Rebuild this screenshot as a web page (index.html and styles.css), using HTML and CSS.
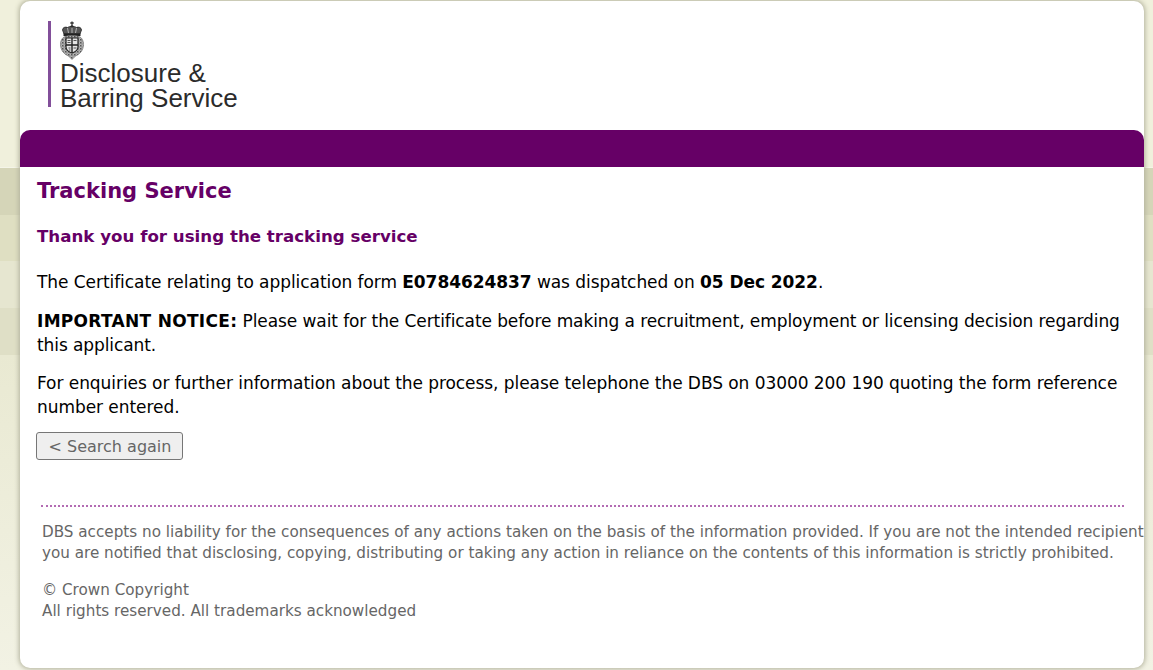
FILE: index.html
```html
<!DOCTYPE html>
<html lang="en">
  <head>
    <meta charset="UTF-8" />
    <title>Tracking Service</title>
    <link rel="stylesheet" href="styles.css">
  </head>
  <body>
    <div id="page">
      <div id="header">
        <div id="logo">
          <svg class="crest" width="26" height="40" viewBox="0 0 26 40">
            <defs>
              <pattern id="speckle" width="3" height="3" patternUnits="userSpaceOnUse">
                <rect width="3" height="3" fill="#b5b5b5" />
                <rect width="1.500" height="1.500" fill="#555" />
                <rect x="1.500" y="1.500" width="1" height="1" fill="#666" />
              </pattern>
            </defs>
            <path d="M13 0.500v4M11.300 2h3.400" stroke="#333" stroke-width="1.300" fill="none" />
            <circle cx="13" cy="5.500" r="1.500" fill="#333" />
            <path d="M5 13L3.500 9c0-2.500 3-3.500 5-2.500 1.500-1.500 7.500-1.500 9 0 2-1 5 0 5 2.500L21 13z" fill="#555" stroke="#222" stroke-width="0.800" />
            <path d="M8.500 7l1 5M13 7v5M17.500 7l-1 5" stroke="#ccc" stroke-width="0.800" />
            <rect x="4.500" y="12.500" width="17" height="2.500" fill="#222" />
            <path d="M13 14.500c6 0 11.500 1 11.500 9 0 6-4 10-8 11.500l-3.500 3.500-3.500-3.500c-4-1.500-8-5.500-8-11.500 0-8 5.500-9 11.500-9z" fill="url(#speckle)" stroke="#666" stroke-width="0.600" />
            <path d="M7 17h12v9c0 3.500-3 5-6 6-3-1-6-2.500-6-6z" fill="#e4e4e4" stroke="#222" stroke-width="1.200" />
            <path d="M13 17v15M7 24h12" stroke="#222" stroke-width="1.400" />
            <path d="M8.500 19.500h3M14.500 19.500h3M8.500 21.500h3M14.500 27h3M9.500 27h2M10 29h1.500" stroke="#555" />
          </svg>
          <div class="logo-name">Disclosure &amp;<br />Barring Service</div>
        </div>
      </div>
      <div id="bar"></div>
      <div id="content">
        <h1>Tracking Service</h1>
        <h2>Thank you for using the tracking service</h2>
        <p>The Certificate relating to application form <b>E0784624837</b> was dispatched on <b>05 Dec 2022</b>.</p>
        <p class="notice"><b>IMPORTANT NOTICE:</b> Please wait for the Certificate before making a recruitment, employment or licensing decision regarding this applicant.</p>
        <p>For enquiries or further information about the process, please telephone the DBS on 03000 200 190 quoting the form reference number entered.</p>
        <button id="btn">&lt; Search again</button>
      </div>
      <div id="footer">
        <p>DBS accepts no liability for the consequences of any actions taken on the basis of the information provided. If you are not the intended recipient you are notified that disclosing, copying, distributing or taking any action in reliance on the contents of this information is strictly prohibited.</p>
        <p>&copy; Crown Copyright<br />All rights reserved. All trademarks acknowledged</p>
      </div>
    </div>
  </body>
</html>
```

FILE: styles.css
```css
html,
body {
  margin: 0;
  height: 670px;
  overflow: hidden;
}
body {
  font-family: "DejaVu Sans", Verdana, sans-serif;
  background: linear-gradient(
    #f0f0dc 0,
    #f0f0dc 167px,
    #f5f5e8 167px,
    #f5f5e8 168px,
    #d5d5b8 168px,
    #d5d5b8 215px,
    #dfdfc2 215px,
    #dfdfc2 261px,
    #e6e6d0 261px,
    #e6e6d0 308px,
    #dfdfc6 308px,
    #dfdfc6 355px,
    #e9e9d2 355px,
    #f2f2e4 670px
  );
}
#page {
  box-sizing: border-box;
  width: 1124px;
  height: 667px;
  margin-left: 20px;
  position: relative;
  top: 1px;
  background-color: white;
  border-radius: 10px;
  box-shadow: 0 0 5px 1px #b0b09a;
}
#header {
  height: 129px;
}
#logo {
  margin-left: 28px;
  padding-top: 20px;
  display: flex;
  flex-direction: column;
  position: relative;
}
#logo::before {
  content: "";
  position: absolute;
  left: 0;
  top: 20px;
  width: 3px;
  height: 86px;
  background-color: #824f9a;
}
.crest {
  margin-left: 11px;
  display: block;
}
.logo-name {
  margin-left: 12px;
  margin-top: 0;
  font-family: "Liberation Sans", Arial, sans-serif;
  font-size: 26px;
  line-height: 25px;
  color: #2b2b2b;
}
#bar {
  height: 37px;
  background-color: #660066;
  border-radius: 10px 10px 0 0;
}
#content {
  padding: 0 16px 0 17px;
  height: 338px;
  box-sizing: border-box;
}
h1 {
  margin: 0;
  padding-top: 11px;
  font-size: 21px;
  line-height: 27px;
  color: #660066;
}
h2 {
  margin: 22px 0 0;
  font-size: 16.66px;
  line-height: 20px;
  color: #660066;
}
#content p {
  margin: 0 0 14.500px;
  font-size: 17px;
  letter-spacing: -0.06px;
  line-height: 24px;
  color: black;
}
#content h2 + p {
  margin-top: 23px;
}
#content .notice {
  letter-spacing: -0.09px;
}
.notice b {
  letter-spacing: 0.3px;
}
#btn {
  display: block;
  width: 147px;
  height: 28px;
  margin-top: -2px;
  margin-left: -1px;
  padding: 1px 0 0 1px;
  font-family: inherit;
  font-size: 16px;
  color: #666666;
  background-color: #efefef;
  border: 1px solid #767676;
  border-radius: 3px;
}
#footer {
  margin: 0 20px 0 21px;
  border-top: 2px dotted #b36bb3;
  padding-top: 15px;
  color: #666666;
  font-size: 15.200px;
  line-height: 21px;
  width: 1083px;
}
#footer p {
  margin: 0 -24px 16px 1px;
}
```
